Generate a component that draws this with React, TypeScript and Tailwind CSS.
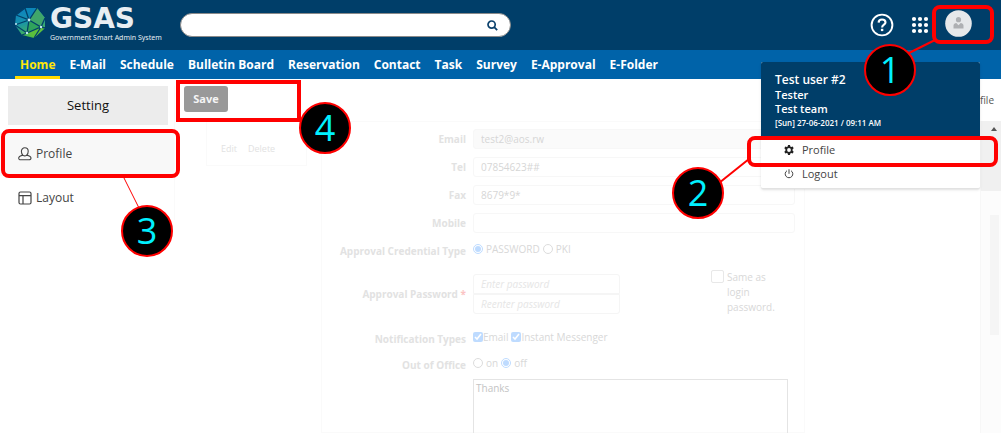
import React from "react";

const navItems = [
  "Home",
  "E-Mail",
  "Schedule",
  "Bulletin Board",
  "Reservation",
  "Contact",
  "Task",
  "Survey",
  "E-Approval",
  "E-Folder",
];

function Emblem() {
  return (
    <svg width="32" height="32" viewBox="0 0 32 32" className="shrink-0" aria-hidden="true">
      <defs>
        <linearGradient id="emblem" x1="0" y1="0" x2="0.3" y2="1">
          <stop offset="0" stopColor="#0b7fc4" />
          <stop offset="0.5" stopColor="#1793ad" />
          <stop offset="1" stopColor="#4db848" />
        </linearGradient>
      </defs>
      <path d="M11 1 L23 1 L31 11 L31 21 L20 31 L8 28 L1 18 L2 8 Z" fill="url(#emblem)" />
      <path d="M11 1 L23 1 L15 13 Z" fill="#0c86b8" />
      <path d="M23 1 L31 11 L27 20 L15 13 Z" fill="#3fa66a" />
      <path d="M27 20 L31 21 L20 31 L13 26 Z" fill="#5bbf3c" />
      <path d="M15 13 L27 20 L13 26 Z" fill="#2fa35c" />
      <path
        d="M11 1 L15 13 L23 1 M15 13 L27 20 L31 11 M2 8 L15 13 L13 26 L1 18 L15 13 M13 26 L27 20 L20 31 M13 26 L8 28 M11 1 L2 8 M27 20 L31 21"
        fill="none"
        stroke="#03406a"
        strokeWidth="1.3"
      />
      <g fill="#bfe6f5">
        <circle cx="15" cy="13" r="1.4" />
        <circle cx="13" cy="26" r="1.2" />
        <circle cx="27" cy="20" r="1.2" />
        <circle cx="2" cy="17" r="1" />
      </g>
    </svg>
  );
}

function Header() {
  return (
    <header className="flex h-[50px] items-center bg-[#003e69] pl-[14px] pr-[29px]">
      <a href="#home" className="flex w-[166px] shrink-0 items-center gap-1 pb-1 text-[#e8eef3]">
        <Emblem />
        <span className="flex flex-col pt-1">
          <span className="font-['DejaVu_Sans',sans-serif] text-[28px] leading-6 font-bold">GSAS</span>
          <span className="pt-[2px] font-['Noto_Sans',sans-serif] text-[7px] leading-[10px] whitespace-nowrap">
            Government Smart Admin System
          </span>
        </span>
      </a>
      <form
        role="search"
        className="flex h-6 w-[331px] items-center rounded-full border border-[#8a8a8a] bg-white pr-3"
        onSubmit={(e) => e.preventDefault()}
      >
        <input type="search" aria-label="Search" className="min-w-0 flex-1 rounded-full px-3 text-xs text-gray-700 outline-none" />
        <button type="submit" aria-label="Run search">
          <svg width="11" height="11" viewBox="0 0 11 11" fill="none" stroke="#0b416c">
            <circle cx="4.6" cy="4.6" r="3.6" strokeWidth="1.7" />
            <path d="M7.2 7.2 L10.2 10.2" strokeWidth="1.8" />
          </svg>
        </button>
      </form>
      <div className="ml-auto flex items-center">
        <button type="button" aria-label="Help">
          <svg width="24" height="24" viewBox="0 0 24 24" fill="none" stroke="#fff">
            <circle cx="12" cy="12" r="10.4" strokeWidth="1.9" />
            <path d="M8.6 9.6 C8.7 7.5 10.1 6.5 12 6.5 C14.1 6.5 15.5 7.7 15.5 9.4 C15.5 11.6 12.1 11.7 12.1 14.4" strokeWidth="2.1" />
            <path d="M12.1 15.8 V18.1" strokeWidth="2.4" />
          </svg>
        </button>
        <button type="button" aria-label="Apps" className="ml-[17px]">
          <svg width="18" height="18" viewBox="0 0 18 18" fill="#fff">
            {[3, 9, 15].map((y) => [3, 9, 15].map((x) => <circle key={`${x}-${y}`} cx={x} cy={y} r="2.1" />))}
          </svg>
        </button>
        <button type="button" aria-label="Account" className="mb-1 ml-4">
          <svg width="27" height="27" viewBox="0 0 27 27">
            <circle cx="13.5" cy="13.5" r="13.3" fill="#e6e8ea" />
            <circle cx="13.5" cy="9.7" r="2.6" fill="#aeb0b3" />
            <path d="M8.5 18.6 V15.5 C8.5 13.8 10 13.2 11.3 13 L13.5 15.3 L15.7 13 C17 13.2 18.5 13.8 18.5 15.5 V18.6 Z" fill="#aeb0b3" />
          </svg>
        </button>
      </div>
    </header>
  );
}

function Nav() {
  return (
    <nav className="flex h-[29px] gap-1 bg-[#0063a9] pl-[15px]">
      {navItems.map((item, i) => (
        <a
          key={item}
          href="#nav"
          className={
            i === 0
              ? "border-b-[3px] border-[#ffdc00] px-[5px] text-xs leading-[30px] font-bold whitespace-nowrap text-[#ffe60a]"
              : "px-[5px] text-xs leading-[30px] font-bold whitespace-nowrap text-white"
          }
        >
          {item}
        </a>
      ))}
    </nav>
  );
}

function Sidebar() {
  return (
    <aside className="w-[185px] shrink-0 pt-[7px]">
      <div className="mr-[10px] border-r border-[#fafafa] pl-2">
        <h2 className="mr-[6px] flex h-[39px] items-center justify-center bg-[#ececec] text-[13px] text-[#111]">Setting</h2>
        <a href="#profile" className="mt-[7px] -ml-2 flex h-11 items-center gap-1 bg-[#f8f8f8] pl-[18px] text-xs text-[#444]">
          <svg width="14" height="14" viewBox="0 0 14 14" fill="none" stroke="#444" strokeWidth="1.1">
            <path d="M4.8 8.1 C3.7 7.2 3.4 5.8 3.4 4.3 C3.4 2.2 4.8 .8 6.8 .8 C8.8 .8 10.2 2.2 10.2 4.3 C10.2 5.8 9.9 7.2 8.8 8.1" />
            <path d="M4.8 8.1 C6 9 7.6 9 8.8 8.1 C11 8.7 13 9.4 13 11 C13 12.4 12.3 12.8 10.8 12.8 H2.8 C1.3 12.8 .7 12.4 .7 11 C.7 9.4 2.6 8.7 4.8 8.1 Z" />
          </svg>
          Profile
        </a>
        <a href="#layout" className="-ml-2 flex h-11 items-center gap-1 pl-[18px] text-xs text-[#444]">
          <svg width="14" height="14" viewBox="0 0 14 14" fill="none" stroke="#444" strokeWidth="1.2">
            <rect x="1" y="1" width="12" height="12" rx="1.5" />
            <path d="M1 4.6 H13 M5 4.6 V13" />
          </svg>
          Layout
        </a>
      </div>
    </aside>
  );
}

const labelClass = "text-right text-[10px] leading-5 font-bold text-[#e2e2e2]";
const inputClass = "h-5 w-full min-w-0 rounded-[3px] border border-[#f7f7f7] px-[7px] text-[10px] text-[#d6d6d6] outline-none";
const pwClass = "block h-5 w-full border border-[#f5f5f5] px-[7px] text-[10px] italic outline-none placeholder:text-[#e6e6e6]";
const rowClass = "flex h-4 items-center text-[10px] text-[#d8d8d8]";
const tickClass = "h-[10px] w-[10px] opacity-25";

function Field({ id, label, value }: { id: string; label: string; value: string }) {
  return (
    <>
      <label htmlFor={id} className={labelClass}>{label}</label>
      <input
        id={id}
        defaultValue={value}
        className={id === "email" ? inputClass + " bg-[#fafafa]" : inputClass}
      />
    </>
  );
}

function ProfileForm() {
  return (
    <form className="w-[484px] border border-[#fafafa] pt-[7px] pr-[9px]" onSubmit={(e) => e.preventDefault()}>
      <div className="grid grid-cols-[144px_1fr] gap-x-[7px] gap-y-2">
        <Field id="email" label="Email" value="test2@aos.rw" />
        <Field id="tel" label="Tel" value="07854623##" />
        <Field id="fax" label="Fax" value="8679*9*" />
        <Field id="mobile" label="Mobile" value="" />

        <span className={labelClass + " whitespace-nowrap"}>Approval Credential Type</span>
        <div className={rowClass + " gap-[3px]"}>
          <input id="pw" type="radio" name="cred" defaultChecked className={tickClass} />
          <label htmlFor="pw">PASSWORD</label>
          <input id="pki" type="radio" name="cred" className={tickClass} />
          <label htmlFor="pki">PKI</label>
        </div>

        <label htmlFor="pass" className={labelClass + " mt-[15px]"}>
          Approval Password <span className="text-[#fbc4c4]">*</span>
        </label>
        <div className="mt-[5px] flex h-[47px] justify-between">
          <div className="w-[147px]">
            <input id="pass" type="password" placeholder="Enter password" className={pwClass + " rounded-t-[3px]"} />
            <input type="password" aria-label="Reenter password" placeholder="Reenter password" className={pwClass + " rounded-b-[3px]"} />
          </div>
          <div className="-mt-1 flex w-[84px] gap-[3px]">
            <input id="same" type="checkbox" className="h-[13px] w-[13px] shrink-0 appearance-none rounded-[2px] border border-[#e8e8e8]" />
            <label htmlFor="same" className="w-[52px] text-[10px] leading-[15px] text-[#d8d8d8]">Same as login password.</label>
          </div>
        </div>

        <span className={labelClass + " h-[18px]"}>Notification Types</span>
        <div className={rowClass}>
          <input id="nmail" type="checkbox" defaultChecked className={tickClass} />
          <label htmlFor="nmail" className="mr-[3px]">Email</label>
          <input id="nim" type="checkbox" defaultChecked className={tickClass} />
          <label htmlFor="nim">Instant Messenger</label>
        </div>

        <span className={labelClass}>Out of Office</span>
        <div className={rowClass + " gap-[3px]"}>
          <input id="on" type="radio" name="ooo" className={tickClass} />
          <label htmlFor="on">on</label>
          <input id="off" type="radio" name="ooo" defaultChecked className={tickClass} />
          <label htmlFor="off">off</label>
        </div>
        <span />
        <textarea
          aria-label="Out of office message"
          defaultValue="Thanks"
          className="-mt-1 mr-[7px] h-[72px] resize-none border border-[#e4e4e4] px-[2px] py-px text-[10px] text-[#c4c4c4] outline-none"
        />
      </div>
    </form>
  );
}

function AccountMenu() {
  return (
    <div className="absolute top-[62px] right-[21px] w-[219px] overflow-hidden rounded-[2px] border-b border-[#e2e2e2] bg-white shadow">
      <div className="h-[74px] bg-[#003e69] pt-[10px] pl-[14px] text-white">
        <p className="text-xs leading-4 font-semibold">Test user #2</p>
        <p className="text-[11px] leading-[14px] font-semibold">Tester</p>
        <p className="text-[11px] leading-[14px] font-semibold">Test team</p>
        <p className="text-[8px] leading-[14px] font-semibold">[Sun] 27-06-2021 / 09:11 AM</p>
      </div>
      <a href="#profile" className="flex h-7 items-center gap-2 pl-[23px] text-[11px] text-[#444]">
        <svg width="10" height="10" viewBox="0 0 10 10">
          <path
            d="M4 0 H6 L6.3 1.5 L7.2 2 L8.7 1.4 L9.7 3.2 L8.6 4.3 V5.7 L9.7 6.8 L8.7 8.6 L7.2 8 L6.3 8.5 L6 10 H4 L3.7 8.5 L2.8 8 L1.3 8.6 L.3 6.8 L1.4 5.7 V4.3 L.3 3.2 L1.3 1.4 L2.8 2 L3.7 1.5 Z M5 3.1 A1.9 1.9 0 1 0 5 6.9 A1.9 1.9 0 1 0 5 3.1 Z"
            fill="#222"
            fillRule="evenodd"
          />
        </svg>
        Profile
      </a>
      <a href="#logout" className="flex h-6 items-start gap-2 pt-[2px] pl-[23px] text-[11px] leading-4 text-[#444]">
        <svg width="10" height="10" viewBox="0 0 10 10" fill="none" stroke="#444" className="mt-[3px]">
          <path d="M3 1.7 A3.8 3.8 0 1 0 7 1.7 M5 .3 V4.8" />
        </svg>
        Logout
      </a>
    </div>
  );
}

const stepClass =
  "absolute flex h-[52px] w-[52px] items-center justify-center rounded-full border-2 border-[#ff0000] bg-black text-4xl text-[#00f0ff]";

function Steps() {
  return (
    <div className="pointer-events-none">
      <svg className="absolute top-0 right-0" width="340" height="220" viewBox="0 0 340 220" stroke="#ff0000" strokeWidth="2">
        <path d="M246 54 L274 40 M58 183 L88 159" />
      </svg>
      <svg className="absolute top-[176px] left-[120px]" width="22" height="36" viewBox="0 0 22 36" stroke="#ff0000">
        <path d="M3 0 L19 32" />
      </svg>
      <div className="absolute top-[5px] right-[7px] h-[39px] w-[62px] rounded-[8px] border-4 border-[#ff0000]" />
      <div className="absolute top-[136px] right-[3px] h-[31px] w-[251px] rounded-[8px] border-4 border-[#ff0000]" />
      <div className="absolute top-[129px] left-px h-[49px] w-[179px] rounded-[8px] border-4 border-[#ff0000]" />
      <div className="absolute top-20 left-[176px] h-[42px] w-[125px] border-4 border-[#ff0000]" />
      <div className={stepClass + " top-11 right-[85px]"}>1</div>
      <div className={stepClass + " top-[167px] right-[277px]"}>2</div>
      <div className={stepClass + " top-[205px] left-[121px]"}>3</div>
      <div className={stepClass + " top-[102px] left-[299px]"}>4</div>
    </div>
  );
}

export default function App() {
  return (
    <div className="relative flex h-screen flex-col overflow-hidden bg-white font-['Open_Sans','Noto_Sans',sans-serif]">
      <Header />
      <Nav />
      <div className="flex min-h-0 flex-1">
        <Sidebar />
        <main className="flex min-w-0 flex-1 flex-col">
          <div className="flex h-[42px] shrink-0 items-start justify-between pt-[7px] pr-[7px]">
            <button type="button" className="-ml-px h-[26px] w-[44px] rounded-[3px] bg-[#999] text-[11px] font-bold text-[#f5f5f5]">
              Save
            </button>
            <span className="pt-[7px] text-[10px] leading-[15px] text-[#555]">Profile</span>
          </div>
          <div className="flex min-h-0 flex-1">
            <section className="mr-[14px] ml-[21px] flex h-[45px] w-[101px] shrink-0 items-end gap-[11px] border border-[#fafafa] pb-[10px] pl-[14px] text-[9px] leading-[13px] text-[#e2e2e2]">
              <button type="button">Edit</button>
              <button type="button">Delete</button>
            </section>
            <ProfileForm />
            <div className="ml-auto flex w-[21px] flex-col border-l border-[#f7f7f7] bg-[#fcfcfc]">
              <div className="flex h-[70px] justify-end bg-[#f0f0f0] pt-[6px] pr-1">
                <svg width="6" height="4" viewBox="0 0 6 4">
                  <path d="M3 0 L6 4 H0 Z" fill="#555" />
                </svg>
              </div>
              <div className="mt-6 ml-[9px] h-[120px] w-[9px] bg-[#f5f5f5]" />
            </div>
          </div>
        </main>
      </div>
      <AccountMenu />
      <Steps />
    </div>
  );
}
